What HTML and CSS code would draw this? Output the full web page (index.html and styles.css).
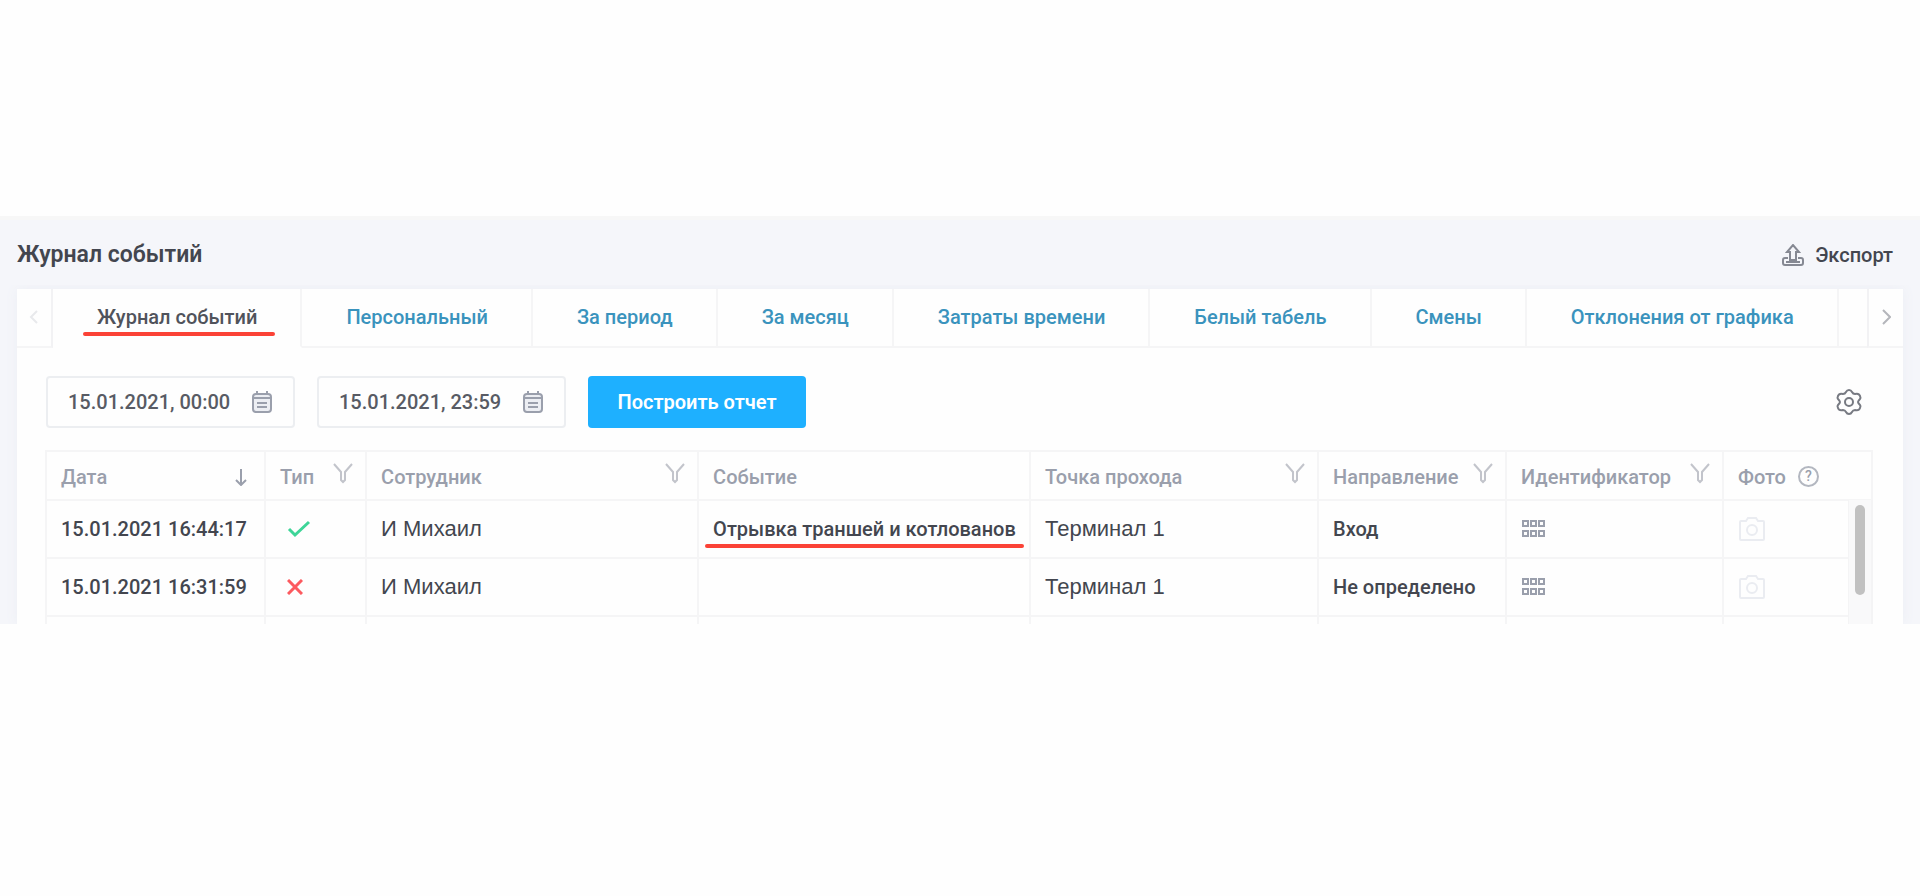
FILE: index.html
```
<!DOCTYPE html>
<html lang="ru">
<head>
    <meta charset="UTF-8">
    <meta name="viewport" content="width=device-width, initial-scale=1.0">
    <title>Журнал событий</title>
    <link rel="stylesheet" href="styles.css">
</head>
<body>

    <!-- общие иконки -->
    <svg class="sprite" width="0" height="0">
        <symbol id="filter" viewBox="0 0 22 22">
            <path d="M2 2L9 10V18L11 20L13 18V10L20 2" />
        </symbol>
        <symbol id="keypad" viewBox="0 0 26 20">
            <path d="M2 2h5v5h-5zM10 2h5v5h-5zM18 2h5v5h-5zM2 12h5v5h-5zM10 12h5v5h-5zM18 12h5v5h-5z" />
        </symbol>
        <symbol id="camera" viewBox="0 0 28 26">
            <path d="M3 5H8L10 2H18L20 5H25Q26 5 26 6V23Q26 24 25 24H3Q2 24 2 23V6Q2 5 3 5Z" />
            <circle cx="14" cy="14" r="5" />
        </symbol>
        <symbol id="calendar" viewBox="0 0 22 24">
            <rect x="2" y="4" width="18" height="18" rx="3" fill="#eceef3" />
            <path d="M2 8H20M6 1V5M16 1V5M6 13H16M6 17H16" />
        </symbol>
    </svg>

    <div class="journal">
        <header>
            <h1>Журнал событий</h1>
            <button class="export">
                <svg width="22" height="22" viewBox="0 0 22 22"><path d="M8 16V8H5L11 1L17 8H14V16H8ZM6 14H3Q1 14 1 16V19Q1 21 3 21H19Q21 21 21 19V16Q21 14 19 14H16M4 18H18" /></svg>
                Экспорт
            </button>
        </header>

        <main class="card">
            <nav class="tabs">
                <button class="arrow prev" aria-label="Назад" disabled><svg width="10" height="16" viewBox="0 0 10 16"><path d="M8 2L2 8L8 14" /></svg></button>
                <a href="#" class="active"><span>Журнал событий</span></a>
                <a href="#">Персональный</a>
                <a href="#">За период</a>
                <a href="#">За месяц</a>
                <a href="#">Затраты времени</a>
                <a href="#">Белый табель</a>
                <a href="#">Смены</a>
                <a href="#">Отклонения от графика</a>
                <div class="rest"></div>
                <button class="arrow next" aria-label="Вперед"><svg width="10" height="16" viewBox="0 0 10 16"><path d="M2 1L9 8L2 15" /></svg></button>
            </nav>

            <div class="controls">
                <label class="date">
                    <input type="text" value="15.01.2021, 00:00" aria-label="Начало периода">
                    <svg width="22" height="24"><use href="#calendar" /></svg>
                </label>
                <label class="date">
                    <input type="text" value="15.01.2021, 23:59" aria-label="Конец периода">
                    <svg width="22" height="24"><use href="#calendar" /></svg>
                </label>
                <button class="build">Построить отчет</button>
                <button class="settings" aria-label="Настройки">
                    <svg width="28" height="28" viewBox="0 0 28 28">
                        <path d="M14 2Q16 2 17 4Q18 6 20 6Q24 5 25 8Q26 10 25 11Q23 13 23 14Q23 15 25 17Q26 18 25 20Q24 23 20 22Q18 22 17 24Q16 26 14 26Q12 26 11 24Q10 22 8 22Q4 23 3 20Q2 18 3 17Q5 15 5 14Q5 13 3 11Q2 10 3 8Q4 5 8 6Q10 6 11 4Q12 2 14 2Z" />
                        <circle cx="14" cy="14" r="4" />
                    </svg>
                </button>
            </div>

            <div class="table-box">
                <table>
                    <colgroup>
                        <col class="c-date"><col class="c-type"><col class="c-name"><col class="c-event">
                        <col class="c-point"><col class="c-dir"><col class="c-id"><col class="c-photo">
                    </colgroup>
                    <thead>
                        <tr>
                            <th><div>Дата <svg class="sort" width="12" height="18" viewBox="0 0 12 18"><path d="M6 1V16M1 12L6 17L11 12" /></svg></div></th>
                            <th><div>Тип <svg class="filter" width="22" height="22"><use href="#filter" /></svg></div></th>
                            <th><div>Сотрудник <svg class="filter" width="22" height="22"><use href="#filter" /></svg></div></th>
                            <th><div>Событие</div></th>
                            <th><div>Точка прохода <svg class="filter" width="22" height="22"><use href="#filter" /></svg></div></th>
                            <th><div>Направление <svg class="filter" width="22" height="22"><use href="#filter" /></svg></div></th>
                            <th><div>Идентификатор <svg class="filter" width="22" height="22"><use href="#filter" /></svg></div></th>
                            <th><div class="photo-head">Фото <span class="help">?</span></div></th>
                        </tr>
                    </thead>
                    <tbody>
                        <tr>
                            <td>15.01.2021 16:44:17</td>
                            <td class="type"><svg class="ok" width="24" height="18" viewBox="0 0 24 18"><path d="M2 9L8 15L22 2" /></svg></td>
                            <td class="big">И Михаил</td>
                            <td><span class="marked">Отрывка траншей и котлованов</span></td>
                            <td class="big">Терминал 1</td>
                            <td>Вход</td>
                            <td><svg class="keypad" width="26" height="20"><use href="#keypad" /></svg></td>
                            <td><svg class="camera" width="28" height="26"><use href="#camera" /></svg></td>
                        </tr>
                        <tr>
                            <td>15.01.2021 16:31:59</td>
                            <td class="type"><svg class="fail" width="16" height="16" viewBox="0 0 16 16"><path d="M1 1L15 15M15 1L1 15" /></svg></td>
                            <td class="big">И Михаил</td>
                            <td></td>
                            <td class="big">Терминал 1</td>
                            <td>Не определено</td>
                            <td><svg class="keypad" width="26" height="20"><use href="#keypad" /></svg></td>
                            <td><svg class="camera" width="28" height="26"><use href="#camera" /></svg></td>
                        </tr>
                        <tr>
                            <td></td><td></td><td></td><td></td><td></td><td></td><td></td><td></td>
                        </tr>
                    </tbody>
                </table>
                <div class="scroll"><div class="thumb"></div></div>
            </div>
        </main>
    </div>

</body>
</html>
```
FILE: styles.css
```
* {
    box-sizing: border-box;
}
body {
    margin: 0;
    padding-top: 216px;
    background: #fefefe;
    color: #43464f;
    font: 500 20px/24px Roboto, "Liberation Sans", sans-serif;
}
button {
    border: 0;
    padding: 0;
    background: none;
    color: inherit;
    font: inherit;
    cursor: pointer;
}
svg {
    fill: none;
    stroke: currentColor;
    stroke-width: 2;
}
.sprite {
    position: absolute;
}
.journal {
    border-top: 4px solid #f7f7f7;
    padding: 0 17px;
    background: #f5f6fa;
}
header {
    display: flex;
    justify-content: space-between;
    align-items: center;
    height: 69px;
    padding-right: 10px;
}
h1 {
    margin: 0;
    font-size: 23px;
    font-weight: 600;
}
.export {
    display: flex;
    align-items: center;
    gap: 11px;
}
.export svg {
    color: #868993;
}
.card {
    background: #fefefe;
    box-shadow: 0 0 12px #eceef4;
    clip-path: inset(-4px -14px 0 -14px);
}

/* вкладки */
.tabs {
    display: flex;
    height: 59px;
}
.tabs a {
    padding: 16px 43px 0 44px;
    border-right: 2px solid #f5f5f6;
    border-bottom: 2px solid #f5f5f6;
    color: #3a93bd;
    text-decoration: none;
    white-space: nowrap;
}
.tabs .active {
    border-bottom-color: transparent;
    color: #50535b;
}
.active span {
    position: relative;
}
.active span::after,
.marked::after {
    content: "";
    position: absolute;
    left: -14px;
    right: -18px;
    top: 27px;
    height: 4px;
    border-radius: 2px;
    background: #fb4236;
}
.rest {
    flex: 1;
    border-bottom: 2px solid #f5f5f6;
}
.arrow {
    flex-shrink: 0;
    border-bottom: 2px solid #f5f5f6;
    width: 36px;
}
.prev {
    border-right: 2px solid #f2f2f4;
    color: #e8e9ec;
}
.next {
    border-left: 2px solid #f2f2f4;
    color: #b4b6bb;
}

/* период */
.controls {
    display: flex;
    align-items: center;
    gap: 22px;
    padding: 28px 40px 22px 29px;
}
.date {
    display: flex;
    align-items: center;
    width: 249px;
    height: 52px;
    padding: 0 20px;
    border: 2px solid #eceef1;
    border-radius: 4px;
    color: #9a9fac;
}
.date input {
    flex: 1;
    min-width: 0;
    padding: 0;
    border: 0;
    outline: 0;
    background: none;
    color: #585b64;
    font: inherit;
}
.build {
    width: 218px;
    height: 52px;
    border-radius: 4px;
    background: #1eb0ff;
    color: #fff;
    font-weight: 600;
}
.settings {
    margin-left: auto;
    height: 28px;
    color: #777a82;
}

/* таблица */
.table-box {
    position: relative;
    height: 174px;
    margin: 0 30px 0 28px;
    overflow: hidden;
}
table {
    width: 100%;
    border-collapse: collapse;
    table-layout: fixed;
}
.c-date { width: 12%; }
.c-type { width: 101px; }
.c-name { width: 332px; }
.c-event { width: auto; }
.c-point { width: 288px; }
.c-dir { width: 188px; }
.c-id { width: 217px; }
.c-photo { width: 149px; }
th, td {
    padding: 0 11px 0 14px;
    border: 2px solid #f5f5f6;
    text-align: left;
    white-space: nowrap;
}
th {
    height: 49px;
    color: #9a9fac;
    font-weight: 500;
}
th div {
    display: flex;
    justify-content: space-between;
    align-items: center;
    padding-top: 2px;
}
td {
    height: 58px;
}
td svg {
    display: block;
}
.filter {
    margin-bottom: 8px;
    color: #c2c4cb;
}
.sort {
    margin-right: 6px;
}
th .photo-head {
    justify-content: flex-start;
    gap: 12px;
}
.help {
    width: 21px;
    height: 21px;
    border: 2px solid #b3b7c0;
    border-radius: 50%;
    font-size: 14px;
    line-height: 17px;
    text-align: center;
}
.big {
    font: 400 22px/24px "Liberation Sans", sans-serif;
}
.type {
    padding-left: 21px;
}
.ok {
    stroke: #3ed598;
    stroke-width: 3;
}
.fail {
    stroke: #fc5a5f;
    stroke-width: 3;
}
.marked {
    position: relative;
}
.marked::after {
    left: -8px;
    right: -8px;
}
.keypad {
    color: #9a9fac;
}
.camera {
    color: #eaecf1;
}
.scroll {
    position: absolute;
    top: 50px;
    right: 0;
    bottom: 0;
    width: 25px;
    padding: 5px 6px;
    border: solid #f4f4f5;
    border-width: 0 2px 0 1px;
    background: #f9f9fa;
}
.thumb {
    height: 90px;
    border-radius: 7px;
    background: #c1c1c1;
}
```
